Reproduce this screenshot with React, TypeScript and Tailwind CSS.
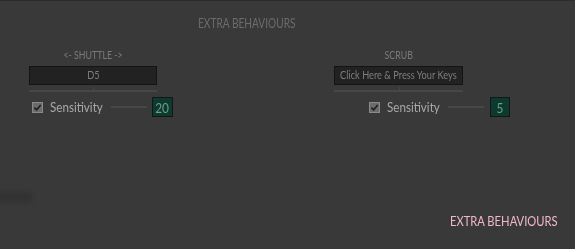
import React from "react";

const FONT = { fontFamily: "Lato, 'Open Sans', sans-serif" };

function Check() {
  return (
    <span className="flex h-[11px] w-[11px] shrink-0 items-center justify-center border border-[#8a8a8a] bg-[#6b6b6b]">
      <svg viewBox="0 0 10 10" className="h-[9px] w-[9px]" aria-hidden>
        <path d="M1.5 5.2 L4 7.6 L8.6 2.2" fill="none" stroke="#1e1e1e" strokeWidth="1.8" />
      </svg>
    </span>
  );
}

function KeyBox({ label, width, text }: { label: string; width: string; text: string }) {
  return (
    <div className={width}>
      <div className="flex h-[13px] justify-center whitespace-nowrap text-[11px] leading-[13px] text-[#7a7a7a]">
        <span className="inline-block scale-x-[0.8]">{label}</span>
      </div>
      <div className="mt-[5px] flex h-[19px] items-center justify-center whitespace-nowrap border border-[#141414] bg-[#222222] text-[11px] text-[#7e7e7e]">
        <span className="inline-block scale-x-[0.84]">{text}</span>
      </div>
      {/* slider track with center tick */}
      <div className="relative mt-[5px] h-[2px] bg-[#474747]">
        <span className="absolute bottom-0 left-1/2 h-[5px] w-px bg-[#474747]" />
      </div>
    </div>
  );
}

function SensRow({
  value,
  indent,
  line,
  box,
}: {
  value: string;
  indent: string;
  line: string;
  box: string;
}) {
  return (
    <div className={`mt-[5px] flex items-center ${indent}`}>
      <Check />
      <span className="ml-[7px] w-[53px] whitespace-nowrap text-[14px] leading-none text-[#a8a8a8]">
        <span className="inline-block origin-left scale-x-[0.83]">Sensitivity</span>
      </span>
      <span className={`ml-[8px] h-[2px] ${line} bg-[#474747]`} />
      <span className={`flex h-[20px] ${box} items-center justify-center border border-[#151515] bg-[#0d3a2e] text-[14px] text-[#6f9b8c]`}>
        <span className="inline-block scale-x-[0.85]">{value}</span>
      </span>
    </div>
  );
}

export default function App() {
  return (
    <div className="relative h-[249px] w-[575px] overflow-hidden border-t border-[#2c2c2c] bg-[#393939]" style={FONT}>
      <div className="pl-[198px] pt-[14px] text-[13px] leading-[16px] text-[#6c6c6c]">
        <span className="inline-block origin-left scale-x-[0.78] whitespace-nowrap">EXTRA BEHAVIOURS</span>
      </div>
      <div className="mt-[17px] flex">
        <div className="ml-[29px] w-[145px]">
          <KeyBox label="<- SHUTTLE ->" width="w-[128px]" text="D5" />
          <SensRow value="20" indent="ml-[3px]" line="w-[36px]" box="ml-[5px] w-[21px]" />
        </div>
        <div className="ml-[160px] w-[176px]">
          <KeyBox label="SCRUB" width="w-[129px]" text="Click Here & Press Your Keys" />
          <SensRow value="5" indent="ml-[35px]" line="w-[36px]" box="ml-[6px] w-[20px]" />
        </div>
      </div>
      <div className="pointer-events-none absolute left-[-12px] top-[190px] h-[12px] w-[45px] rounded-full bg-[#303030] opacity-70 blur-[2px]" />
      <div className="absolute bottom-[20px] right-[17px] whitespace-nowrap text-[14px] leading-[16px] text-[#f2b8c8]">
        <span className="inline-block origin-right scale-x-[0.8]">EXTRA BEHAVIOURS</span>
      </div>
    </div>
  );
}
